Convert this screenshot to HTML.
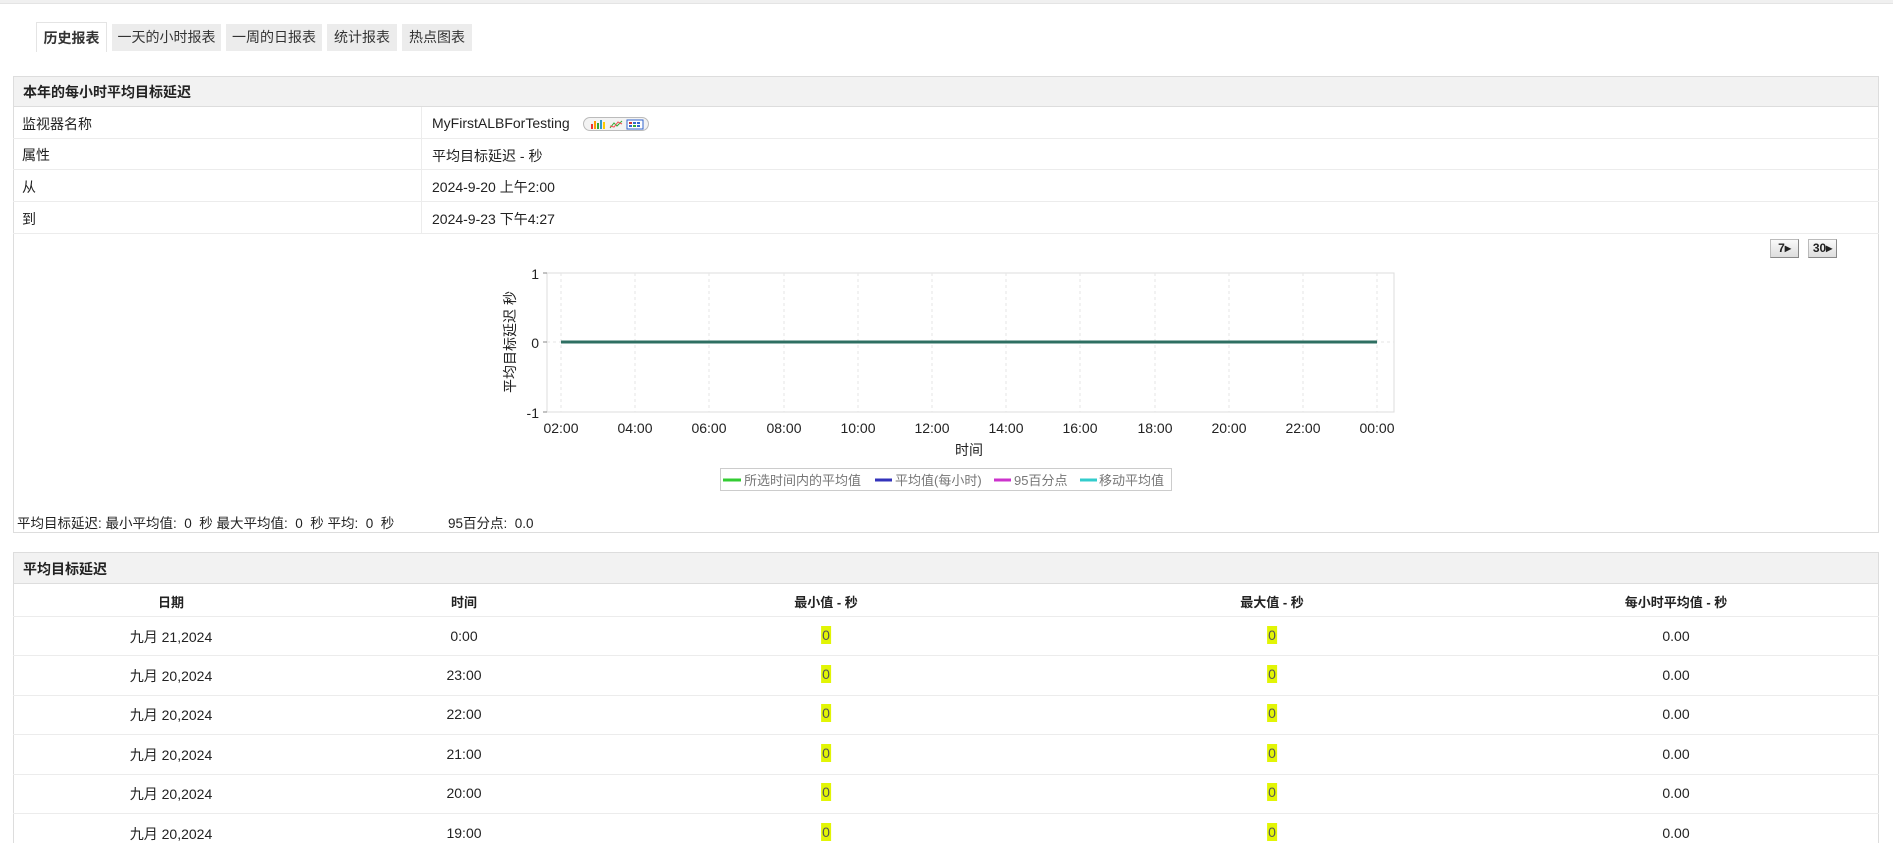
<!DOCTYPE html>
<html style="width:1893px;height:843px;overflow:hidden"><head><meta charset="utf-8"><style>
*{margin:0;padding:0;box-sizing:border-box}
body{width:1893px;height:843px;overflow:hidden;background:#fff;font-family:"Liberation Sans","Noto Sans CJK SC",sans-serif;font-size:14px;color:#222;position:relative}
.a{position:absolute;white-space:nowrap}
.tab{position:absolute;top:24px;height:27px;background:#ececec;line-height:27px;text-align:center;font-size:14px;color:#333}
.row{position:absolute;left:13px;width:1866px;border-bottom:1px solid #ececec}
.hl{background:#e2f505;padding:1px 1px;color:#555}
.c{position:absolute;transform:translateX(-50%);white-space:nowrap}
.btn{position:absolute;top:239px;height:19px;background:linear-gradient(#fafafa,#ddd);border:1px solid #bbb;border-right-color:#888;border-bottom-color:#888;font:bold 12px "Liberation Sans",sans-serif;text-align:center;line-height:17px}
</style></head><body>
<div class="a" style="left:0;top:0;width:1893px;height:4px;background:#f0f0f0;border-bottom:1px solid #e4e4e4"></div>
<div class="tab" style="left:36px;width:71px;top:22px;height:30px;background:#fff;border:1px solid #e4e4e4;border-bottom:none;font-weight:bold;line-height:30px">历史报表</div>
<div class="tab" style="left:112px;width:109px">一天的小时报表</div>
<div class="tab" style="left:226px;width:96px">一周的日报表</div>
<div class="tab" style="left:327px;width:70px">统计报表</div>
<div class="tab" style="left:402px;width:70px">热点图表</div>

<div class="a" style="left:13px;top:76px;width:1866px;height:457px;border:1px solid #ddd"></div>
<div class="a" style="left:13px;top:76px;width:1866px;height:31px;background:#f2f2f2;border:1px solid #ddd;font-weight:bold;line-height:31px;padding-left:9px">本年的每小时平均目标延迟</div>
<div class="row" style="top:107px;height:32px"></div>
<div class="row" style="top:139px;height:31px"></div>
<div class="row" style="top:170px;height:32px"></div>
<div class="row" style="top:202px;height:32px"></div>
<div class="a" style="left:421px;top:107px;width:1px;height:127px;background:#ececec"></div>
<div class="a" style="left:22px;top:114px">监视器名称</div>
<div class="a" style="left:22px;top:145px">属性</div>
<div class="a" style="left:22px;top:177px">从</div>
<div class="a" style="left:22px;top:209px">到</div>
<div class="a" style="left:432px;top:115px">MyFirstALBForTesting</div>
<div class="a" style="left:583px;top:117px;width:66px;height:14px;border:1px solid #bbb;border-radius:7px;background:#f3f3f3">
<svg width="64" height="12" style="position:absolute;left:1px;top:0"><rect x="6" y="6" width="2" height="5" fill="#e33"/><rect x="9" y="3" width="2" height="8" fill="#f90"/><rect x="12" y="5" width="2" height="6" fill="#3a3"/><rect x="15" y="2" width="2" height="9" fill="#39c"/><rect x="18" y="4" width="2" height="7" fill="#fc0"/><polyline points="25,10 29,5 32,8 37,3" stroke="#3a3" fill="none"/><polyline points="25,8 29,9 33,4 37,6" stroke="#e55" fill="none"/><rect x="42" y="2" width="16" height="9" fill="#fff" stroke="#36c"/><rect x="44" y="4" width="3" height="2" fill="#c33"/><rect x="48" y="4" width="3" height="2" fill="#36c"/><rect x="52" y="4" width="3" height="2" fill="#36c"/><rect x="44" y="7" width="3" height="2" fill="#36c"/><rect x="48" y="7" width="3" height="2" fill="#3a3"/><rect x="52" y="7" width="3" height="2" fill="#36c"/></svg></div>
<div class="a" style="left:432px;top:146px">平均目标延迟 - 秒</div>
<div class="a" style="left:432px;top:177px">2024-9-20 上午2:00</div>
<div class="a" style="left:432px;top:209px">2024-9-23 下午4:27</div>
<div class="btn" style="left:1770px;width:29px">7&#9656;</div>
<div class="btn" style="left:1808px;width:29px">30&#9656;</div>

<svg class="a" style="left:0;top:0" width="1893" height="843" font-family="Liberation Sans, Noto Sans CJK SC, sans-serif">
<rect x="547" y="273" width="847" height="139" fill="#fff" stroke="#ddd"/>
<g stroke="#e6e6e6" stroke-dasharray="3,3">
<line x1="561" y1="273" x2="561" y2="412"/><line x1="635" y1="273" x2="635" y2="412"/><line x1="709" y1="273" x2="709" y2="412"/><line x1="784" y1="273" x2="784" y2="412"/><line x1="858" y1="273" x2="858" y2="412"/><line x1="932" y1="273" x2="932" y2="412"/><line x1="1006" y1="273" x2="1006" y2="412"/><line x1="1080" y1="273" x2="1080" y2="412"/><line x1="1155" y1="273" x2="1155" y2="412"/><line x1="1229" y1="273" x2="1229" y2="412"/><line x1="1303" y1="273" x2="1303" y2="412"/><line x1="1377" y1="273" x2="1377" y2="412"/>
<line x1="547" y1="342" x2="1394" y2="342"/>
</g>
<g stroke="#888"><line x1="543" y1="273" x2="547" y2="273"/><line x1="543" y1="342" x2="547" y2="342"/><line x1="543" y1="412" x2="547" y2="412"/></g>
<line x1="561" y1="342" x2="1377" y2="342" stroke="#2e6f62" stroke-width="3"/>
<g font-size="14" fill="#222" text-anchor="end"><text x="539" y="279">1</text><text x="539" y="348">0</text><text x="539" y="418">-1</text></g>
<g font-size="14" fill="#222" text-anchor="middle">
<text x="561" y="433">02:00</text><text x="635" y="433">04:00</text><text x="709" y="433">06:00</text><text x="784" y="433">08:00</text><text x="858" y="433">10:00</text><text x="932" y="433">12:00</text><text x="1006" y="433">14:00</text><text x="1080" y="433">16:00</text><text x="1155" y="433">18:00</text><text x="1229" y="433">20:00</text><text x="1303" y="433">22:00</text><text x="1377" y="433">00:00</text>
<text x="969" y="455">时间</text>
<text transform="translate(515,342) rotate(-90)">平均目标延迟 秒</text>
</g>
<rect x="720.5" y="468.5" width="451" height="22" fill="#fff" stroke="#ccc"/>
<g stroke-width="3"><line x1="723" y1="480" x2="741" y2="480" stroke="#3c3"/><line x1="875" y1="480" x2="892" y2="480" stroke="#33b"/><line x1="994" y1="480" x2="1011" y2="480" stroke="#c3c"/><line x1="1080" y1="480" x2="1097" y2="480" stroke="#3cc"/></g>
<g font-size="13" fill="#777"><text x="744" y="485">所选时间内的平均值</text><text x="895" y="485">平均值(每小时)</text><text x="1014" y="485">95百分点</text><text x="1099" y="485">移动平均值</text></g>
</svg>
<div class="a" style="left:17px;top:512px;font-size:13.5px">平均目标延迟: 最小平均值:&nbsp; 0&nbsp; 秒 最大平均值:&nbsp; 0&nbsp; 秒 平均:&nbsp; 0&nbsp; 秒</div>
<div class="a" style="left:448px;top:512px;font-size:13.5px">95百分点:&nbsp; 0.0</div>

<div class="a" style="left:13px;top:552px;width:1866px;height:291px;border:1px solid #ddd;border-bottom:none"></div>
<div class="a" style="left:13px;top:552px;width:1866px;height:32px;background:#f2f2f2;border:1px solid #ddd;font-weight:bold;line-height:32px;padding-left:9px">平均目标延迟</div>
<div class="row" style="top:584px;height:33px"></div>
<div class="c" style="left:171px;top:592px;font-weight:bold;font-size:13px">日期</div>
<div class="c" style="left:464px;top:592px;font-weight:bold;font-size:13px">时间</div>
<div class="c" style="left:826px;top:592px;font-weight:bold;font-size:13px">最小值 - 秒</div>
<div class="c" style="left:1272px;top:592px;font-weight:bold;font-size:13px">最大值 - 秒</div>
<div class="c" style="left:1676px;top:592px;font-weight:bold;font-size:13px">每小时平均值 - 秒</div>

<div class="row" style="top:617px;height:39px"></div>
<div class="row" style="top:656px;height:40px"></div>
<div class="row" style="top:696px;height:39px"></div>
<div class="row" style="top:735px;height:40px"></div>
<div class="row" style="top:775px;height:39px"></div>

<div class="c" style="left:171px;top:627px">九月 21,2024</div><div class="c" style="left:464px;top:628px">0:00</div><div class="c" style="left:826px;top:627px"><span class="hl">0</span></div><div class="c" style="left:1272px;top:627px"><span class="hl">0</span></div><div class="c" style="left:1676px;top:628px">0.00</div>
<div class="c" style="left:171px;top:666px">九月 20,2024</div><div class="c" style="left:464px;top:667px">23:00</div><div class="c" style="left:826px;top:666px"><span class="hl">0</span></div><div class="c" style="left:1272px;top:666px"><span class="hl">0</span></div><div class="c" style="left:1676px;top:667px">0.00</div>
<div class="c" style="left:171px;top:705px">九月 20,2024</div><div class="c" style="left:464px;top:706px">22:00</div><div class="c" style="left:826px;top:705px"><span class="hl">0</span></div><div class="c" style="left:1272px;top:705px"><span class="hl">0</span></div><div class="c" style="left:1676px;top:706px">0.00</div>
<div class="c" style="left:171px;top:745px">九月 20,2024</div><div class="c" style="left:464px;top:746px">21:00</div><div class="c" style="left:826px;top:745px"><span class="hl">0</span></div><div class="c" style="left:1272px;top:745px"><span class="hl">0</span></div><div class="c" style="left:1676px;top:746px">0.00</div>
<div class="c" style="left:171px;top:784px">九月 20,2024</div><div class="c" style="left:464px;top:785px">20:00</div><div class="c" style="left:826px;top:784px"><span class="hl">0</span></div><div class="c" style="left:1272px;top:784px"><span class="hl">0</span></div><div class="c" style="left:1676px;top:785px">0.00</div>
<div class="c" style="left:171px;top:824px">九月 20,2024</div><div class="c" style="left:464px;top:825px">19:00</div><div class="c" style="left:826px;top:824px"><span class="hl">0</span></div><div class="c" style="left:1272px;top:824px"><span class="hl">0</span></div><div class="c" style="left:1676px;top:825px">0.00</div>
</body></html>
